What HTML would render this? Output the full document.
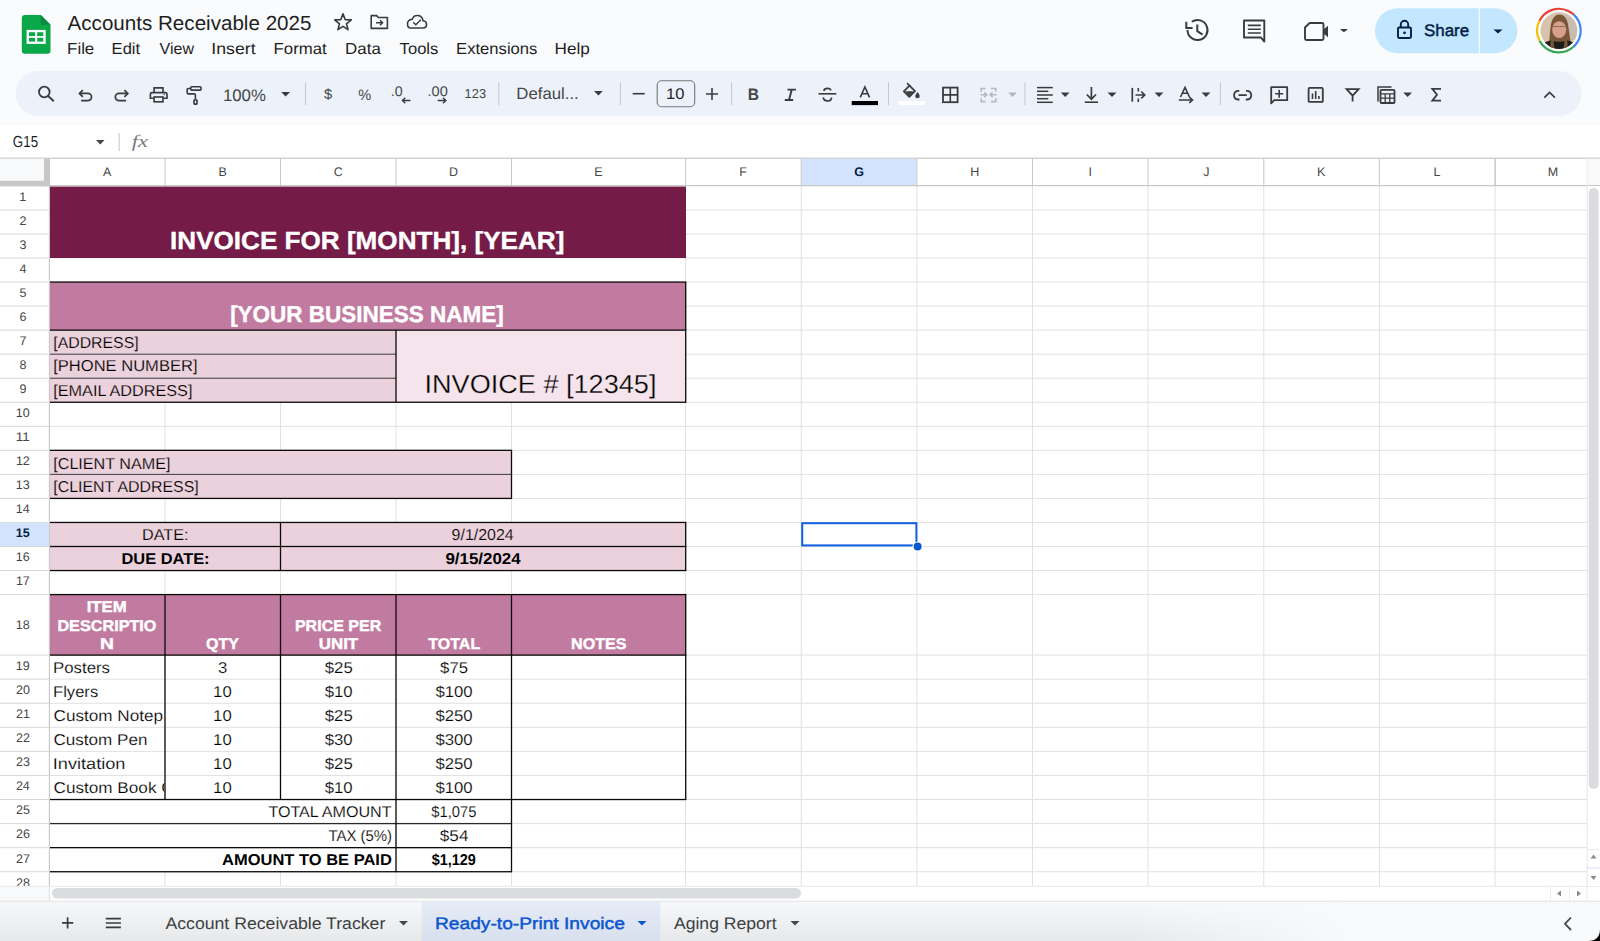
<!DOCTYPE html>
<html><head><meta charset="utf-8"><title>Accounts Receivable 2025 - Google Sheets</title>
<style>
html,body{margin:0;padding:0;width:1600px;height:941px;overflow:hidden;background:#fff;font-family:"Liberation Sans",sans-serif;}
text{font-family:"Liberation Sans",sans-serif;text-rendering:geometricPrecision;}
</style></head><body>
<div style="position:relative;width:1600px;height:941px;overflow:hidden">
<svg width="1600" height="941" viewBox="0 0 1600 941" style="position:absolute;left:0;top:0;font-family:'Liberation Sans',sans-serif">
<rect x="0.00" y="0.00" width="1600.00" height="126.00" fill="#f9fbfd" />
<rect x="0.00" y="126.00" width="1600.00" height="760.00" fill="#ffffff" />
<rect x="15.5" y="71" width="1566" height="45" rx="22.5" fill="#edf2fa"/>
<rect x="164.50" y="185.90" width="1.00" height="700.10" fill="#e1e1e1" />
<rect x="280.00" y="185.90" width="1.00" height="700.10" fill="#e1e1e1" />
<rect x="395.50" y="185.90" width="1.00" height="700.10" fill="#e1e1e1" />
<rect x="511.00" y="185.90" width="1.00" height="700.10" fill="#e1e1e1" />
<rect x="685.10" y="185.90" width="1.00" height="700.10" fill="#e1e1e1" />
<rect x="800.70" y="185.90" width="1.00" height="700.10" fill="#e1e1e1" />
<rect x="916.40" y="185.90" width="1.00" height="700.10" fill="#e1e1e1" />
<rect x="1032.00" y="185.90" width="1.00" height="700.10" fill="#e1e1e1" />
<rect x="1147.60" y="185.90" width="1.00" height="700.10" fill="#e1e1e1" />
<rect x="1263.30" y="185.90" width="1.00" height="700.10" fill="#e1e1e1" />
<rect x="1378.90" y="185.90" width="1.00" height="700.10" fill="#e1e1e1" />
<rect x="1494.60" y="185.90" width="1.00" height="700.10" fill="#e1e1e1" />
<rect x="49.50" y="209.44" width="1537.50" height="1.00" fill="#e1e1e1" />
<rect x="49.50" y="233.48" width="1537.50" height="1.00" fill="#e1e1e1" />
<rect x="49.50" y="257.52" width="1537.50" height="1.00" fill="#e1e1e1" />
<rect x="49.50" y="281.56" width="1537.50" height="1.00" fill="#e1e1e1" />
<rect x="49.50" y="305.60" width="1537.50" height="1.00" fill="#e1e1e1" />
<rect x="49.50" y="329.64" width="1537.50" height="1.00" fill="#e1e1e1" />
<rect x="49.50" y="353.68" width="1537.50" height="1.00" fill="#e1e1e1" />
<rect x="49.50" y="377.72" width="1537.50" height="1.00" fill="#e1e1e1" />
<rect x="49.50" y="401.76" width="1537.50" height="1.00" fill="#e1e1e1" />
<rect x="49.50" y="425.80" width="1537.50" height="1.00" fill="#e1e1e1" />
<rect x="49.50" y="449.84" width="1537.50" height="1.00" fill="#e1e1e1" />
<rect x="49.50" y="473.88" width="1537.50" height="1.00" fill="#e1e1e1" />
<rect x="49.50" y="497.92" width="1537.50" height="1.00" fill="#e1e1e1" />
<rect x="49.50" y="521.96" width="1537.50" height="1.00" fill="#e1e1e1" />
<rect x="49.50" y="546.00" width="1537.50" height="1.00" fill="#e1e1e1" />
<rect x="49.50" y="570.04" width="1537.50" height="1.00" fill="#e1e1e1" />
<rect x="49.50" y="594.08" width="1537.50" height="1.00" fill="#e1e1e1" />
<rect x="49.50" y="654.60" width="1537.50" height="1.00" fill="#e1e1e1" />
<rect x="49.50" y="678.67" width="1537.50" height="1.00" fill="#e1e1e1" />
<rect x="49.50" y="702.74" width="1537.50" height="1.00" fill="#e1e1e1" />
<rect x="49.50" y="726.81" width="1537.50" height="1.00" fill="#e1e1e1" />
<rect x="49.50" y="750.88" width="1537.50" height="1.00" fill="#e1e1e1" />
<rect x="49.50" y="774.95" width="1537.50" height="1.00" fill="#e1e1e1" />
<rect x="49.50" y="799.02" width="1537.50" height="1.00" fill="#e1e1e1" />
<rect x="49.50" y="823.09" width="1537.50" height="1.00" fill="#e1e1e1" />
<rect x="49.50" y="847.16" width="1537.50" height="1.00" fill="#e1e1e1" />
<rect x="49.50" y="871.23" width="1537.50" height="1.00" fill="#e1e1e1" />
<rect x="50.00" y="186.50" width="636.00" height="71.52" fill="#741b47" />
<rect x="50.00" y="258.52" width="635.00" height="23.04" fill="#ffffff" />
<rect x="50.00" y="282.06" width="636.00" height="48.08" fill="#c27ba0" />
<rect x="50.00" y="330.14" width="346.00" height="72.12" fill="#ead1dc" />
<rect x="396.00" y="330.14" width="290.00" height="72.12" fill="#f5e4eb" />
<rect x="50.00" y="450.34" width="461.50" height="48.08" fill="#ead1dc" />
<rect x="50.00" y="522.46" width="636.00" height="48.08" fill="#ead1dc" />
<rect x="50.00" y="594.58" width="636.00" height="60.52" fill="#c27ba0" />
<rect x="50.50" y="655.60" width="0.00" height="0.00" fill="#fff" />
<rect x="50.20" y="655.10" width="345.50" height="0.00" fill="#fff" />
<rect x="50.30" y="800.12" width="345.20" height="22.87" fill="#ffffff" />
<rect x="50.30" y="824.19" width="345.20" height="22.87" fill="#ffffff" />
<rect x="50.30" y="848.26" width="345.20" height="22.87" fill="#ffffff" />
<rect x="49.50" y="281.41" width="636.80" height="1.30" fill="#0a0a0a" />
<rect x="49.50" y="329.49" width="636.80" height="1.30" fill="#0a0a0a" />
<rect x="49.50" y="353.68" width="346.50" height="1.00" fill="#3c3c3c" />
<rect x="49.50" y="377.72" width="346.50" height="1.00" fill="#3c3c3c" />
<rect x="49.50" y="401.61" width="636.80" height="1.30" fill="#0a0a0a" />
<rect x="685.05" y="282.06" width="1.30" height="120.20" fill="#0a0a0a" />
<rect x="395.35" y="330.14" width="1.30" height="72.12" fill="#0a0a0a" />
<rect x="49.50" y="449.69" width="462.60" height="1.30" fill="#0a0a0a" />
<rect x="49.50" y="473.88" width="462.60" height="1.00" fill="#3c3c3c" />
<rect x="49.50" y="497.77" width="462.60" height="1.30" fill="#0a0a0a" />
<rect x="510.85" y="450.34" width="1.30" height="48.08" fill="#0a0a0a" />
<rect x="49.50" y="521.81" width="636.80" height="1.30" fill="#0a0a0a" />
<rect x="49.50" y="545.85" width="636.80" height="1.30" fill="#0a0a0a" />
<rect x="49.50" y="569.89" width="636.80" height="1.30" fill="#0a0a0a" />
<rect x="279.85" y="522.46" width="1.30" height="48.08" fill="#0a0a0a" />
<rect x="685.05" y="522.46" width="1.30" height="48.08" fill="#0a0a0a" />
<rect x="49.50" y="593.93" width="636.80" height="1.30" fill="#0a0a0a" />
<rect x="49.50" y="654.45" width="636.80" height="1.30" fill="#0a0a0a" />
<rect x="49.50" y="798.87" width="636.80" height="1.30" fill="#0a0a0a" />
<rect x="164.35" y="594.58" width="1.30" height="204.94" fill="#0a0a0a" />
<rect x="279.85" y="594.58" width="1.30" height="204.94" fill="#0a0a0a" />
<rect x="395.35" y="594.58" width="1.30" height="204.94" fill="#0a0a0a" />
<rect x="510.85" y="594.58" width="1.30" height="204.94" fill="#0a0a0a" />
<rect x="685.05" y="594.58" width="1.30" height="204.94" fill="#0a0a0a" />
<rect x="49.50" y="822.94" width="462.60" height="1.30" fill="#2a2a2a" />
<rect x="49.50" y="847.01" width="462.60" height="1.30" fill="#0a0a0a" />
<rect x="49.50" y="871.08" width="462.60" height="1.30" fill="#0a0a0a" />
<rect x="395.35" y="799.52" width="1.30" height="72.21" fill="#0a0a0a" />
<rect x="510.85" y="799.52" width="1.30" height="72.21" fill="#0a0a0a" />
<text x="170.05" y="248.90" font-size="24.71" font-weight="bold" stroke="#ffffff" stroke-width="0.40" fill="#ffffff" textLength="394.31" lengthAdjust="spacingAndGlyphs">INVOICE FOR [MONTH], [YEAR]</text>
<text x="230.14" y="322.40" font-size="22.97" font-weight="bold" stroke="#ffffff" stroke-width="0.40" fill="#ffffff" textLength="273.63" lengthAdjust="spacingAndGlyphs">[YOUR BUSINESS NAME]</text>
<text x="53.27" y="348.10" font-size="15.77" stroke="#ead1dc" stroke-width="0.18" fill="#000" textLength="85.36" lengthAdjust="spacingAndGlyphs">[ADDRESS]</text>
<text x="53.22" y="371.30" font-size="15.77" stroke="#ead1dc" stroke-width="0.18" fill="#000" textLength="144.26" lengthAdjust="spacingAndGlyphs">[PHONE NUMBER]</text>
<text x="53.26" y="395.60" font-size="15.77" stroke="#ead1dc" stroke-width="0.18" fill="#000" textLength="139.19" lengthAdjust="spacingAndGlyphs">[EMAIL ADDRESS]</text>
<text x="424.50" y="393.00" font-size="26.16" stroke="#f5e4eb" stroke-width="0.30" fill="#000" textLength="231.93" lengthAdjust="spacingAndGlyphs">INVOICE # [12345]</text>
<text x="53.25" y="468.50" font-size="15.77" stroke="#ead1dc" stroke-width="0.18" fill="#000" textLength="117.20" lengthAdjust="spacingAndGlyphs">[CLIENT NAME]</text>
<text x="53.28" y="492.00" font-size="15.77" stroke="#ead1dc" stroke-width="0.18" fill="#000" textLength="145.45" lengthAdjust="spacingAndGlyphs">[CLIENT ADDRESS]</text>
<text x="142.01" y="540.00" font-size="15.77" stroke="#ead1dc" stroke-width="0.18" fill="#000" textLength="46.43" lengthAdjust="spacingAndGlyphs">DATE:</text>
<text x="121.52" y="563.80" font-size="15.77" font-weight="bold" fill="#000" textLength="88.04" lengthAdjust="spacingAndGlyphs">DUE DATE:</text>
<text x="451.55" y="540.00" font-size="15.77" stroke="#ead1dc" stroke-width="0.18" fill="#000" textLength="62.22" lengthAdjust="spacingAndGlyphs">9/1/2024</text>
<text x="445.41" y="563.80" font-size="15.77" font-weight="bold" fill="#000" textLength="75.18" lengthAdjust="spacingAndGlyphs">9/15/2024</text>
<text x="86.68" y="612.00" font-size="15.55" font-weight="bold" stroke="#ffffff" stroke-width="0.40" fill="#ffffff" textLength="40.04" lengthAdjust="spacingAndGlyphs">ITEM</text>
<text x="57.42" y="630.50" font-size="15.55" font-weight="bold" stroke="#ffffff" stroke-width="0.40" fill="#ffffff" textLength="99.06" lengthAdjust="spacingAndGlyphs">DESCRIPTIO</text>
<text x="100.01" y="649.00" font-size="15.55" font-weight="bold" stroke="#ffffff" stroke-width="0.40" fill="#ffffff" textLength="13.88" lengthAdjust="spacingAndGlyphs">N</text>
<text x="206.04" y="649.00" font-size="15.55" font-weight="bold" stroke="#ffffff" stroke-width="0.40" fill="#ffffff" textLength="32.91" lengthAdjust="spacingAndGlyphs">QTY</text>
<text x="294.93" y="630.50" font-size="15.55" font-weight="bold" stroke="#ffffff" stroke-width="0.40" fill="#ffffff" textLength="86.40" lengthAdjust="spacingAndGlyphs">PRICE PER</text>
<text x="318.79" y="649.00" font-size="15.55" font-weight="bold" stroke="#ffffff" stroke-width="0.40" fill="#ffffff" textLength="39.40" lengthAdjust="spacingAndGlyphs">UNIT</text>
<text x="428.33" y="648.50" font-size="15.55" font-weight="bold" stroke="#ffffff" stroke-width="0.40" fill="#ffffff" textLength="51.85" lengthAdjust="spacingAndGlyphs">TOTAL</text>
<text x="571.12" y="648.50" font-size="15.55" font-weight="bold" stroke="#ffffff" stroke-width="0.40" fill="#ffffff" textLength="55.51" lengthAdjust="spacingAndGlyphs">NOTES</text>
<text x="53.02" y="672.57" font-size="15.70" stroke="#ffffff" stroke-width="0.18" fill="#000" textLength="56.99" lengthAdjust="spacingAndGlyphs">Posters</text>
<text x="218.10" y="672.57" font-size="15.70" stroke="#ffffff" stroke-width="0.18" fill="#000" textLength="9.31" lengthAdjust="spacingAndGlyphs">3</text>
<text x="324.80" y="672.57" font-size="15.70" stroke="#ffffff" stroke-width="0.18" fill="#000" textLength="27.92" lengthAdjust="spacingAndGlyphs">$25</text>
<text x="440.10" y="672.57" font-size="15.70" stroke="#ffffff" stroke-width="0.18" fill="#000" textLength="27.92" lengthAdjust="spacingAndGlyphs">$75</text>
<text x="53.04" y="696.64" font-size="15.70" stroke="#ffffff" stroke-width="0.18" fill="#000" textLength="45.16" lengthAdjust="spacingAndGlyphs">Flyers</text>
<text x="213.08" y="696.64" font-size="15.70" stroke="#ffffff" stroke-width="0.18" fill="#000" textLength="18.61" lengthAdjust="spacingAndGlyphs">10</text>
<text x="324.78" y="696.64" font-size="15.70" stroke="#ffffff" stroke-width="0.18" fill="#000" textLength="27.92" lengthAdjust="spacingAndGlyphs">$10</text>
<text x="435.42" y="696.64" font-size="15.70" stroke="#ffffff" stroke-width="0.18" fill="#000" textLength="37.22" lengthAdjust="spacingAndGlyphs">$100</text>
<svg x="50" y="703.24" width="114.3" height="24" overflow="hidden">
<text x="3.53" y="17.47" font-size="15.70" fill="#000" stroke="#fff" stroke-width="0.18" textLength="137.28" lengthAdjust="spacingAndGlyphs">Custom Notepads</text>
</svg>
<text x="213.08" y="720.71" font-size="15.70" stroke="#ffffff" stroke-width="0.18" fill="#000" textLength="18.61" lengthAdjust="spacingAndGlyphs">10</text>
<text x="324.80" y="720.71" font-size="15.70" stroke="#ffffff" stroke-width="0.18" fill="#000" textLength="27.92" lengthAdjust="spacingAndGlyphs">$25</text>
<text x="435.42" y="720.71" font-size="15.70" stroke="#ffffff" stroke-width="0.18" fill="#000" textLength="37.22" lengthAdjust="spacingAndGlyphs">$250</text>
<text x="53.53" y="744.78" font-size="15.70" stroke="#ffffff" stroke-width="0.18" fill="#000" textLength="93.87" lengthAdjust="spacingAndGlyphs">Custom Pen</text>
<text x="213.08" y="744.78" font-size="15.70" stroke="#ffffff" stroke-width="0.18" fill="#000" textLength="18.61" lengthAdjust="spacingAndGlyphs">10</text>
<text x="324.78" y="744.78" font-size="15.70" stroke="#ffffff" stroke-width="0.18" fill="#000" textLength="27.92" lengthAdjust="spacingAndGlyphs">$30</text>
<text x="435.42" y="744.78" font-size="15.70" stroke="#ffffff" stroke-width="0.18" fill="#000" textLength="37.22" lengthAdjust="spacingAndGlyphs">$300</text>
<text x="52.72" y="768.85" font-size="15.70" stroke="#ffffff" stroke-width="0.18" fill="#000" textLength="72.76" lengthAdjust="spacingAndGlyphs">Invitation</text>
<text x="213.08" y="768.85" font-size="15.70" stroke="#ffffff" stroke-width="0.18" fill="#000" textLength="18.61" lengthAdjust="spacingAndGlyphs">10</text>
<text x="324.80" y="768.85" font-size="15.70" stroke="#ffffff" stroke-width="0.18" fill="#000" textLength="27.92" lengthAdjust="spacingAndGlyphs">$25</text>
<text x="435.42" y="768.85" font-size="15.70" stroke="#ffffff" stroke-width="0.18" fill="#000" textLength="37.22" lengthAdjust="spacingAndGlyphs">$250</text>
<svg x="50" y="775.45" width="114.3" height="24" overflow="hidden">
<text x="3.53" y="17.47" font-size="15.70" fill="#000" stroke="#fff" stroke-width="0.18" textLength="162.04" lengthAdjust="spacingAndGlyphs">Custom Book Covers</text>
</svg>
<text x="213.08" y="792.92" font-size="15.70" stroke="#ffffff" stroke-width="0.18" fill="#000" textLength="18.61" lengthAdjust="spacingAndGlyphs">10</text>
<text x="324.78" y="792.92" font-size="15.70" stroke="#ffffff" stroke-width="0.18" fill="#000" textLength="27.92" lengthAdjust="spacingAndGlyphs">$10</text>
<text x="435.42" y="792.92" font-size="15.70" stroke="#ffffff" stroke-width="0.18" fill="#000" textLength="37.22" lengthAdjust="spacingAndGlyphs">$100</text>
<text x="268.40" y="817.00" font-size="15.70" stroke="#ffffff" stroke-width="0.18" fill="#000" textLength="123.16" lengthAdjust="spacingAndGlyphs">TOTAL AMOUNT</text>
<text x="328.42" y="841.00" font-size="15.70" stroke="#ffffff" stroke-width="0.18" fill="#000" textLength="63.69" lengthAdjust="spacingAndGlyphs">TAX (5%)</text>
<text x="222.09" y="865.00" font-size="15.70" font-weight="bold" fill="#000" textLength="169.79" lengthAdjust="spacingAndGlyphs">AMOUNT TO BE PAID</text>
<text x="431.24" y="817.00" font-size="15.70" stroke="#ffffff" stroke-width="0.18" fill="#000" textLength="45.18" lengthAdjust="spacingAndGlyphs">$1,075</text>
<text x="439.82" y="841.00" font-size="15.70" stroke="#ffffff" stroke-width="0.18" fill="#000" textLength="28.69" lengthAdjust="spacingAndGlyphs">$54</text>
<text x="431.71" y="865.00" font-size="15.70" font-weight="bold" fill="#000" textLength="44.13" lengthAdjust="spacingAndGlyphs">$1,129</text>
<rect x="802.2" y="523.2" width="114.2" height="22.2" fill="none" stroke="#0f5fe0" stroke-width="2"/>
<circle cx="917.6" cy="546.6" r="5.2" fill="#ffffff"/>
<circle cx="917.6" cy="546.6" r="4.0" fill="#0b57d0"/>
<rect x="0.00" y="158.00" width="1587.00" height="27.90" fill="#ffffff" />
<rect x="0.00" y="157.60" width="1600.00" height="1.20" fill="#c7c7c7" />
<rect x="49.50" y="185.00" width="1550.50" height="1.20" fill="#c7c7c7" />
<rect x="0.00" y="158.80" width="44.00" height="22.00" fill="#f8f9fa" />
<rect x="44.00" y="158.80" width="5.50" height="27.80" fill="#c7c7c7" />
<rect x="0.00" y="180.80" width="49.50" height="5.80" fill="#c7c7c7" />
<rect x="801.70" y="158.80" width="114.70" height="26.20" fill="#d3e3fd" />
<text x="103.08" y="176.20" font-size="12.50" fill="#444746" textLength="8.34" lengthAdjust="spacingAndGlyphs">A</text>
<rect x="164.50" y="158.20" width="1.00" height="27.40" fill="#c7c7c7" />
<text x="218.40" y="176.20" font-size="12.50" fill="#444746" textLength="8.34" lengthAdjust="spacingAndGlyphs">B</text>
<rect x="280.00" y="158.20" width="1.00" height="27.40" fill="#c7c7c7" />
<text x="333.66" y="176.20" font-size="12.50" fill="#444746" textLength="9.03" lengthAdjust="spacingAndGlyphs">C</text>
<rect x="395.50" y="158.20" width="1.00" height="27.40" fill="#c7c7c7" />
<text x="449.02" y="176.20" font-size="12.50" fill="#444746" textLength="9.03" lengthAdjust="spacingAndGlyphs">D</text>
<rect x="511.00" y="158.20" width="1.00" height="27.40" fill="#c7c7c7" />
<text x="594.14" y="176.20" font-size="12.50" fill="#444746" textLength="8.34" lengthAdjust="spacingAndGlyphs">E</text>
<rect x="685.10" y="158.20" width="1.00" height="27.40" fill="#c7c7c7" />
<text x="739.32" y="176.20" font-size="12.50" fill="#444746" textLength="7.64" lengthAdjust="spacingAndGlyphs">F</text>
<rect x="800.70" y="158.20" width="1.00" height="27.40" fill="#c7c7c7" />
<text x="854.32" y="176.20" font-size="12.50" font-weight="bold" fill="#041e49" textLength="9.72" lengthAdjust="spacingAndGlyphs">G</text>
<rect x="916.40" y="158.20" width="1.00" height="27.40" fill="#c7c7c7" />
<text x="970.18" y="176.20" font-size="12.50" fill="#444746" textLength="9.03" lengthAdjust="spacingAndGlyphs">H</text>
<rect x="1032.00" y="158.20" width="1.00" height="27.40" fill="#c7c7c7" />
<text x="1088.56" y="176.20" font-size="12.50" fill="#444746" textLength="3.47" lengthAdjust="spacingAndGlyphs">I</text>
<rect x="1147.60" y="158.20" width="1.00" height="27.40" fill="#c7c7c7" />
<text x="1203.19" y="176.20" font-size="12.50" fill="#444746" textLength="6.25" lengthAdjust="spacingAndGlyphs">J</text>
<rect x="1263.30" y="158.20" width="1.00" height="27.40" fill="#c7c7c7" />
<text x="1316.99" y="176.20" font-size="12.50" fill="#444746" textLength="8.34" lengthAdjust="spacingAndGlyphs">K</text>
<rect x="1378.90" y="158.20" width="1.00" height="27.40" fill="#c7c7c7" />
<text x="1433.47" y="176.20" font-size="12.50" fill="#444746" textLength="6.95" lengthAdjust="spacingAndGlyphs">L</text>
<rect x="1494.60" y="158.20" width="1.00" height="27.40" fill="#c7c7c7" />
<text x="1547.69" y="176.20" font-size="12.50" fill="#444746" textLength="10.41" lengthAdjust="spacingAndGlyphs">M</text>
<rect x="1494.60" y="158.20" width="1.00" height="27.40" fill="#c7c7c7" />
<rect x="0.00" y="186.60" width="49.00" height="700.00" fill="#ffffff" />
<rect x="48.85" y="158.20" width="1.10" height="727.80" fill="#c7c7c7" />
<rect x="0.00" y="209.44" width="49.40" height="1.00" fill="#d9d9d9" />
<text x="19.35" y="200.80" font-size="12.50" fill="#444746" textLength="6.95" lengthAdjust="spacingAndGlyphs">1</text>
<rect x="0.00" y="233.48" width="49.40" height="1.00" fill="#d9d9d9" />
<text x="19.52" y="224.84" font-size="12.50" fill="#444746" textLength="6.95" lengthAdjust="spacingAndGlyphs">2</text>
<rect x="0.00" y="257.52" width="49.40" height="1.00" fill="#d9d9d9" />
<text x="19.56" y="248.88" font-size="12.50" fill="#444746" textLength="6.95" lengthAdjust="spacingAndGlyphs">3</text>
<rect x="0.00" y="281.56" width="49.40" height="1.00" fill="#d9d9d9" />
<text x="19.56" y="272.92" font-size="12.50" fill="#444746" textLength="6.95" lengthAdjust="spacingAndGlyphs">4</text>
<rect x="0.00" y="305.60" width="49.40" height="1.00" fill="#d9d9d9" />
<text x="19.54" y="296.96" font-size="12.50" fill="#444746" textLength="6.95" lengthAdjust="spacingAndGlyphs">5</text>
<rect x="0.00" y="329.64" width="49.40" height="1.00" fill="#d9d9d9" />
<text x="19.48" y="321.00" font-size="12.50" fill="#444746" textLength="6.95" lengthAdjust="spacingAndGlyphs">6</text>
<rect x="0.00" y="353.68" width="49.40" height="1.00" fill="#d9d9d9" />
<text x="19.52" y="345.04" font-size="12.50" fill="#444746" textLength="6.95" lengthAdjust="spacingAndGlyphs">7</text>
<rect x="0.00" y="377.72" width="49.40" height="1.00" fill="#d9d9d9" />
<text x="19.52" y="369.08" font-size="12.50" fill="#444746" textLength="6.95" lengthAdjust="spacingAndGlyphs">8</text>
<rect x="0.00" y="401.76" width="49.40" height="1.00" fill="#d9d9d9" />
<text x="19.53" y="393.12" font-size="12.50" fill="#444746" textLength="6.95" lengthAdjust="spacingAndGlyphs">9</text>
<rect x="0.00" y="425.80" width="49.40" height="1.00" fill="#d9d9d9" />
<text x="15.82" y="417.16" font-size="12.50" fill="#444746" textLength="13.90" lengthAdjust="spacingAndGlyphs">10</text>
<rect x="0.00" y="449.84" width="49.40" height="1.00" fill="#d9d9d9" />
<text x="15.88" y="441.20" font-size="12.50" fill="#444746" textLength="13.90" lengthAdjust="spacingAndGlyphs">11</text>
<rect x="0.00" y="473.88" width="49.40" height="1.00" fill="#d9d9d9" />
<text x="15.89" y="465.24" font-size="12.50" fill="#444746" textLength="13.90" lengthAdjust="spacingAndGlyphs">12</text>
<rect x="0.00" y="497.92" width="49.40" height="1.00" fill="#d9d9d9" />
<text x="15.85" y="489.28" font-size="12.50" fill="#444746" textLength="13.90" lengthAdjust="spacingAndGlyphs">13</text>
<rect x="0.00" y="521.96" width="49.40" height="1.00" fill="#d9d9d9" />
<text x="15.76" y="513.32" font-size="12.50" fill="#444746" textLength="13.90" lengthAdjust="spacingAndGlyphs">14</text>
<rect x="0.00" y="522.96" width="49.00" height="23.04" fill="#d3e3fd" />
<rect x="0.00" y="546.00" width="49.40" height="1.00" fill="#d9d9d9" />
<text x="15.83" y="537.36" font-size="12.50" font-weight="bold" fill="#041e49" textLength="13.90" lengthAdjust="spacingAndGlyphs">15</text>
<rect x="0.00" y="570.04" width="49.40" height="1.00" fill="#d9d9d9" />
<text x="15.85" y="561.40" font-size="12.50" fill="#444746" textLength="13.90" lengthAdjust="spacingAndGlyphs">16</text>
<rect x="0.00" y="594.08" width="49.40" height="1.00" fill="#d9d9d9" />
<text x="15.89" y="585.44" font-size="12.50" fill="#444746" textLength="13.90" lengthAdjust="spacingAndGlyphs">17</text>
<rect x="0.00" y="654.60" width="49.40" height="1.00" fill="#d9d9d9" />
<text x="15.84" y="629.00" font-size="12.50" fill="#444746" textLength="13.90" lengthAdjust="spacingAndGlyphs">18</text>
<rect x="0.00" y="678.67" width="49.40" height="1.00" fill="#d9d9d9" />
<text x="15.87" y="670.00" font-size="12.50" fill="#444746" textLength="13.90" lengthAdjust="spacingAndGlyphs">19</text>
<rect x="0.00" y="702.74" width="49.40" height="1.00" fill="#d9d9d9" />
<text x="15.98" y="694.07" font-size="12.50" fill="#444746" textLength="13.90" lengthAdjust="spacingAndGlyphs">20</text>
<rect x="0.00" y="726.81" width="49.40" height="1.00" fill="#d9d9d9" />
<text x="16.04" y="718.14" font-size="12.50" fill="#444746" textLength="13.90" lengthAdjust="spacingAndGlyphs">21</text>
<rect x="0.00" y="750.88" width="49.40" height="1.00" fill="#d9d9d9" />
<text x="16.05" y="742.21" font-size="12.50" fill="#444746" textLength="13.90" lengthAdjust="spacingAndGlyphs">22</text>
<rect x="0.00" y="774.95" width="49.40" height="1.00" fill="#d9d9d9" />
<text x="16.01" y="766.28" font-size="12.50" fill="#444746" textLength="13.90" lengthAdjust="spacingAndGlyphs">23</text>
<rect x="0.00" y="799.02" width="49.40" height="1.00" fill="#d9d9d9" />
<text x="15.92" y="790.35" font-size="12.50" fill="#444746" textLength="13.90" lengthAdjust="spacingAndGlyphs">24</text>
<rect x="0.00" y="823.09" width="49.40" height="1.00" fill="#d9d9d9" />
<text x="16.00" y="814.42" font-size="12.50" fill="#444746" textLength="13.90" lengthAdjust="spacingAndGlyphs">25</text>
<rect x="0.00" y="847.16" width="49.40" height="1.00" fill="#d9d9d9" />
<text x="16.01" y="838.49" font-size="12.50" fill="#444746" textLength="13.90" lengthAdjust="spacingAndGlyphs">26</text>
<rect x="0.00" y="871.23" width="49.40" height="1.00" fill="#d9d9d9" />
<text x="16.05" y="862.56" font-size="12.50" fill="#444746" textLength="13.90" lengthAdjust="spacingAndGlyphs">27</text>
<text x="16.01" y="886.93" font-size="12.50" fill="#444746" textLength="13.90" lengthAdjust="spacingAndGlyphs">28</text>
<rect x="0.00" y="886.00" width="1600.00" height="15.00" fill="#ffffff" />
<rect x="0.00" y="885.80" width="1600.00" height="1.00" fill="#e8e8e8" />
<rect x="0.00" y="886.80" width="49.00" height="14.00" fill="#f8f9fa" />
<rect x="48.90" y="886.00" width="1.00" height="15.00" fill="#e0e0e0" />
<rect x="52" y="888" width="749" height="10.5" rx="5.25" fill="#dadce0"/>
<rect x="1550.00" y="886.00" width="1.00" height="15.00" fill="#ececec" />
<rect x="1569.00" y="886.00" width="1.00" height="15.00" fill="#ececec" />
<rect x="1586.50" y="886.00" width="1.00" height="15.00" fill="#ececec" />
<path d="M1561 890.5 L1557 893.5 L1561 896.5Z" fill="#8a8a8a"/>
<path d="M1577 890.5 L1581 893.5 L1577 896.5Z" fill="#8a8a8a"/>
<rect x="1587.00" y="186.00" width="13.00" height="700.00" fill="#ffffff" />
<rect x="1586.70" y="158.00" width="1.00" height="728.00" fill="#e6e6e6" />
<rect x="1587.70" y="158.80" width="12.30" height="26.20" fill="#f8f9fa" />
<rect x="1588.7" y="188" width="10" height="601" rx="5" fill="#dadce0"/>
<rect x="1587.00" y="849.00" width="13.00" height="1.00" fill="#ececec" />
<rect x="1587.00" y="867.50" width="13.00" height="1.00" fill="#d8e2f5" />
<path d="M1593.5 854.5 L1590.5 858.5 L1596.5 858.5Z" fill="#8a8a8a"/>
<path d="M1593.5 880 L1590.5 876 L1596.5 876Z" fill="#8a8a8a"/>
<text x="12.83" y="146.50" font-size="15.99" fill="#1f1f1f" textLength="25.23" lengthAdjust="spacingAndGlyphs">G15</text>
<path d="M96 140 L104.5 140 L100.25 144.5Z" fill="#444746"/>
<rect x="118.70" y="133.00" width="1.00" height="18.00" fill="#c7c7c7" />
<text x="131.8" y="147.3" style="font-family:'Liberation Serif',serif;font-style:italic" font-size="17.5" fill="#7a7a7a" textLength="16.2" lengthAdjust="spacingAndGlyphs">fx</text>
<defs><linearGradient id="tabv" x1="0" y1="0" x2="0" y2="1"><stop offset="0" stop-color="#f7f8fa"/><stop offset="1" stop-color="#e7e8ea"/></linearGradient><linearGradient id="tabh" x1="0" y1="0" x2="1" y2="0"><stop offset="0" stop-color="#f9fafc" stop-opacity="0"/><stop offset="1" stop-color="#f9fafc" stop-opacity="1"/></linearGradient></defs>
<rect x="0.00" y="901.00" width="1600.00" height="40.00" fill="url(#tabv)" />
<rect x="1120.00" y="901.00" width="240.00" height="40.00" fill="url(#tabh)" />
<rect x="1360.00" y="901.00" width="240.00" height="40.00" fill="#f9fafc" />
<rect x="0.00" y="900.70" width="1600.00" height="1.00" fill="#e3e3e3" />
<defs><linearGradient id="acttab" x1="0" y1="0" x2="0" y2="1"><stop offset="0" stop-color="#e5ebf7"/><stop offset="1" stop-color="#d9e0ed"/></linearGradient></defs>
<rect x="421.70" y="901.50" width="238.60" height="39.50" fill="url(#acttab)" />
<path d="M62 922.8 H73.2 M67.6 917.2 V928.4" stroke="#3a3b3d" stroke-width="1.7" fill="none"/>
<path d="M105.8 918.6 H120.9 M105.8 923 H120.9 M105.8 927.4 H120.9" stroke="#3a3b3d" stroke-width="1.6" fill="none"/>
<text x="165.47" y="929.00" font-size="16.57" fill="#3c4043" textLength="219.83" lengthAdjust="spacingAndGlyphs">Account Receivable Tracker</text>
<path d="M399 921 L408 921 L403.5 925.5Z" fill="#444746"/>
<text x="434.93" y="929.00" font-size="16.57" stroke="#0b57d0" stroke-width="0.45" fill="#0b57d0" textLength="189.93" lengthAdjust="spacingAndGlyphs">Ready-to-Print Invoice</text>
<path d="M637.5 921 L646.5 921 L642 925.5Z" fill="#0b57d0"/>
<text x="673.97" y="929.00" font-size="16.57" fill="#3c4043" textLength="102.56" lengthAdjust="spacingAndGlyphs">Aging Report</text>
<path d="M790.5 921 L799.5 921 L795 925.5Z" fill="#444746"/>
<path d="M1571 917.5 L1565 923.8 L1571 930" stroke="#444746" stroke-width="1.8" fill="none"/>
<path d="M1600 929 L1600 941 L1588 941 Q1600 941 1600 929Z" fill="#000"/>
<path d="M24.8 15 H40.8 L50.5 24.7 V50.8 Q50.5 53.8 47.5 53.8 H24.8 Q21.8 53.8 21.8 50.8 V18 Q21.8 15 24.8 15Z" fill="#0ba84a"/>
<path d="M40.8 15 L50.5 24.7 H40.8Z" fill="#0a8a3c"/>
<rect x="26.60" y="29.90" width="19.10" height="14.00" fill="#ffffff" />
<rect x="29.00" y="32.20" width="6.10" height="3.80" fill="#0ba84a" />
<rect x="37.20" y="32.20" width="6.10" height="3.80" fill="#0ba84a" />
<rect x="29.00" y="37.80" width="6.10" height="3.80" fill="#0ba84a" />
<rect x="37.20" y="37.80" width="6.10" height="3.80" fill="#0ba84a" />
<text x="67.56" y="29.50" font-size="20.35" fill="#1f1f1f" textLength="243.91" lengthAdjust="spacingAndGlyphs">Accounts Receivable 2025</text>
<path d="M343 13.8 L345.2 19.6 L351.3 19.9 L346.5 23.8 L348.1 29.7 L343 26.3 L337.9 29.7 L339.5 23.8 L334.7 19.9 L340.8 19.6Z" stroke="#3a3b3d" stroke-width="1.6" fill="none" stroke-linejoin="round"/>
<path d="M371.2 15.6 H376.6 L378.4 17.5 H387.4 V28.4 H371.2Z" stroke="#3a3b3d" stroke-width="1.6" fill="none" stroke-linejoin="round"/>
<path d="M376 22.8 H382.4 M380 20.3 L382.6 22.8 L380 25.3" stroke="#3a3b3d" stroke-width="1.5" fill="none"/>
<path d="M410.5 28 H423 Q426.5 28 426.5 24.5 Q426.5 21 423 20.7 Q422.3 15.5 417.3 15.5 Q413.5 15.5 412.2 19.2 Q407.5 19.7 407.5 23.8 Q407.5 28 410.5 28Z" stroke="#3a3b3d" stroke-width="1.6" fill="none"/>
<path d="M413.2 22.3 L415.8 24.8 L420.8 19.8" stroke="#3a3b3d" stroke-width="1.5" fill="none"/>
<text x="67.12" y="54.00" font-size="15.99" fill="#1f1f1f" textLength="27.13" lengthAdjust="spacingAndGlyphs">File</text>
<text x="111.64" y="54.00" font-size="15.99" fill="#1f1f1f" textLength="28.48" lengthAdjust="spacingAndGlyphs">Edit</text>
<text x="159.53" y="54.00" font-size="15.99" fill="#1f1f1f" textLength="34.43" lengthAdjust="spacingAndGlyphs">View</text>
<text x="211.37" y="54.00" font-size="15.99" fill="#1f1f1f" textLength="44.26" lengthAdjust="spacingAndGlyphs">Insert</text>
<text x="273.62" y="54.00" font-size="15.99" fill="#1f1f1f" textLength="53.10" lengthAdjust="spacingAndGlyphs">Format</text>
<text x="345.11" y="54.00" font-size="15.99" fill="#1f1f1f" textLength="35.69" lengthAdjust="spacingAndGlyphs">Data</text>
<text x="399.64" y="54.00" font-size="15.99" fill="#1f1f1f" textLength="38.73" lengthAdjust="spacingAndGlyphs">Tools</text>
<text x="456.14" y="54.00" font-size="15.99" fill="#1f1f1f" textLength="81.26" lengthAdjust="spacingAndGlyphs">Extensions</text>
<text x="554.59" y="54.00" font-size="15.99" fill="#1f1f1f" textLength="35.33" lengthAdjust="spacingAndGlyphs">Help</text>
<path d="M1191.8 21.8 A10 10 0 1 1 1187.5 30.0" stroke="#3a3b3d" stroke-width="2" fill="none"/>
<path d="M1186.3 21.8 V28.1 H1192.6" stroke="#3a3b3d" stroke-width="2" fill="none"/>
<path d="M1197.3 24.6 V31.2 L1202.6 34.6" stroke="#3a3b3d" stroke-width="2" fill="none"/>
<path d="M1244 20.5 H1264.3 V41.6 L1261 37.5 H1244Z" stroke="#3a3b3d" stroke-width="1.9" fill="none" stroke-linejoin="round"/>
<path d="M1247.8 25.4 H1260.8 M1247.8 29.2 H1260.8 M1247.8 33 H1260.8" stroke="#3a3b3d" stroke-width="1.6" fill="none"/>
<path d="M1309.6 23 H1322 Q1323.5 23 1323.5 24.5 V38.5 Q1323.5 40 1322 40 H1306.5 Q1305 40 1305 38.5 V27.5Z" stroke="#3a3b3d" stroke-width="1.9" fill="none" stroke-linejoin="round"/>
<path d="M1323.5 29.5 L1328 25.7 V37.3 L1323.5 33.5Z" fill="#3a3b3d"/>
<path d="M1339.8 29 L1348 29 L1343.9 32.3Z" fill="#3a3b3d"/>
<rect x="1375" y="8.2" width="142.4" height="45" rx="22.5" fill="#c2e7ff"/>
<rect x="1478.70" y="8.20" width="1.20" height="45.00" fill="#f9fbfd" />
<rect x="1398" y="27.5" width="13" height="10.5" rx="1.2" stroke="#041e49" stroke-width="1.9" fill="none"/>
<path d="M1400.8 27.5 V24.5 A3.7 3.7 0 0 1 1408.2 24.5 V27.5" stroke="#041e49" stroke-width="1.9" fill="none"/>
<circle cx="1404.5" cy="32.8" r="1.4" fill="#041e49"/>
<text x="1423.93" y="36.20" font-size="16.57" stroke="#041e49" stroke-width="0.45" fill="#041e49" textLength="45.22" lengthAdjust="spacingAndGlyphs">Share</text>
<path d="M1493.5 29.5 L1502.5 29.5 L1498 33.5Z" fill="#041e49"/>
<circle cx="1558.90" cy="30.60" r="21.80" fill="none" stroke="#4285f4" stroke-width="2.2" stroke-dasharray="36.53 200" transform="rotate(-48 1558.90 30.60)"/>
<circle cx="1558.90" cy="30.60" r="21.80" fill="none" stroke="#34a853" stroke-width="2.2" stroke-dasharray="39.57 200" transform="rotate(48 1558.90 30.60)"/>
<circle cx="1558.90" cy="30.60" r="21.80" fill="none" stroke="#fbbc04" stroke-width="2.2" stroke-dasharray="20.93 200" transform="rotate(152 1558.90 30.60)"/>
<circle cx="1558.90" cy="30.60" r="21.80" fill="none" stroke="#ea4335" stroke-width="2.2" stroke-dasharray="39.95 200" transform="rotate(207 1558.90 30.60)"/>
<clipPath id="av"><circle cx="1558.90" cy="30.60" r="18.3"/></clipPath>
<g clip-path="url(#av)">
<rect x="1538.00" y="10.00" width="42.00" height="42.00" fill="#d6c3a9" />
<rect x="1566.00" y="10.00" width="14.00" height="30.00" fill="#c9bcae" />
<path d="M1549 52 Q1549.5 32 1551 24 Q1553 14.5 1559.5 14.5 Q1566 14.5 1568 24 Q1569.5 34 1572 52Z" fill="#7a5638"/>
<ellipse cx="1559.2" cy="29.5" rx="7.0" ry="8.6" fill="#d7a08c"/>
<path d="M1552.5 26.5 H1565.5" stroke="#8c6a5c" stroke-width="1" fill="none"/>
<path d="M1538 52 Q1541 41.5 1551 40.5 Q1559 43 1567 40.5 Q1577 41.5 1580 52Z" fill="#1c1c1c"/>
<path d="M1551 40 Q1549.5 46 1551.5 52 H1555 Q1553.5 45 1553.5 39Z M1567 40 Q1568.5 46 1566.5 52 H1563 Q1564.5 45 1564.5 39Z" fill="#7a5638"/>
<path d="M1551.8 24.5 Q1559.5 18 1567 24 Q1566 16.5 1559.5 16.3 Q1552.5 16.5 1551.8 24.5Z" fill="#7a5638"/>
</g>
<circle cx="44.3" cy="92" r="5.3" stroke-width="1.8" stroke="#3a3b3d" fill="none"/>
<path d="M48.2 96 L53.8 101.3" stroke-width="1.9" stroke="#3a3b3d" fill="none"/>
<path d="M81.1 100.7 H87.9 A3.65 3.65 0 0 0 87.9 93.4 H79.5" stroke-width="1.7" stroke="#3a3b3d" fill="none"/>
<path d="M82.8 90.1 L79.5 93.4 L82.8 96.8" stroke-width="1.7" stroke="#3a3b3d" fill="none"/>
<path d="M126.1 100.7 H119 A3.65 3.65 0 0 1 119 93.4 H127.8" stroke-width="1.7" stroke="#3a3b3d" fill="none"/>
<path d="M124.4 90.1 L127.8 93.4 L124.4 96.8" stroke-width="1.7" stroke="#3a3b3d" fill="none"/>
<path d="M154.1 92.4 V87.8 H163 V92.4" stroke-width="1.65" stroke="#3a3b3d" fill="none"/>
<path d="M153.6 98.2 H150.4 V94.2 Q150.4 92.6 152 92.6 H165.4 Q167 92.6 167 94.2 V98.2 H163.6" stroke-width="1.65" stroke="#3a3b3d" fill="none"/>
<rect x="154.1" y="97.0" width="8.9" height="4.8" stroke-width="1.65" stroke="#3a3b3d" fill="none"/>
<circle cx="164.2" cy="94.5" r="0.7" fill="#3a3b3d"/>
<rect x="190.8" y="86.8" width="10.2" height="3.3" rx="0.8" stroke-width="1.6" stroke="#3a3b3d" fill="none"/>
<path d="M190.8 88.45 H188.3 Q187.2 88.45 187.2 89.5 V92.8 Q187.2 93.9 188.3 93.9 H194.3 Q195.4 93.9 195.4 95 V99.5" stroke-width="1.6" stroke="#3a3b3d" fill="none"/>
<rect x="194" y="100" width="3" height="4.1" rx="0.5" stroke-width="1.6" stroke="#3a3b3d" fill="none"/>
<text x="222.92" y="100.80" font-size="16.72" fill="#444746" textLength="42.98" lengthAdjust="spacingAndGlyphs">100%</text>
<path d="M281.20 92.00 L290.00 92.00 L285.60 96.50Z" fill="#3a3b3d"/>
<rect x="305.00" y="82.40" width="1.00" height="22.60" fill="#c7c7c7" />
<text x="324.04" y="99.00" font-size="14.54" fill="#444746" textLength="8.20" lengthAdjust="spacingAndGlyphs">$</text>
<text x="358.18" y="99.50" font-size="15.26" fill="#444746" textLength="12.94" lengthAdjust="spacingAndGlyphs">%</text>
<text x="390.70" y="95.80" font-size="13.95" fill="#444746" textLength="11.85" lengthAdjust="spacingAndGlyphs">.0</text>
<path d="M410.4 100.5 H402.5 M405.3 97.8 L402.4 100.5 L405.3 103.2" stroke-width="1.4" stroke="#3a3b3d" fill="none"/>
<text x="427.47" y="95.80" font-size="13.95" fill="#444746" textLength="20.30" lengthAdjust="spacingAndGlyphs">.00</text>
<path d="M437.7 100.5 H445.8 M443 97.8 L445.9 100.5 L443 103.2" stroke-width="1.4" stroke="#3a3b3d" fill="none"/>
<text x="464.62" y="97.60" font-size="12.94" fill="#444746" textLength="21.44" lengthAdjust="spacingAndGlyphs">123</text>
<rect x="498.30" y="82.40" width="1.00" height="22.60" fill="#c7c7c7" />
<text x="516.33" y="99.20" font-size="16.28" fill="#444746" textLength="62.40" lengthAdjust="spacingAndGlyphs">Defaul...</text>
<path d="M594.00 91.00 L602.80 91.00 L598.40 95.50Z" fill="#3a3b3d"/>
<rect x="619.90" y="82.40" width="1.00" height="22.60" fill="#c7c7c7" />
<rect x="632.70" y="92.90" width="12.00" height="1.60" fill="#3a3b3d" />
<rect x="657.2" y="80.7" width="37.5" height="26" rx="4.5" fill="none" stroke="#747775" stroke-width="1.1"/>
<text x="665.94" y="99.20" font-size="15.41" fill="#1f1f1f" textLength="18.41" lengthAdjust="spacingAndGlyphs">10</text>
<path d="M706 94 H718 M712 88 V100" stroke-width="1.6" stroke="#3a3b3d" fill="none"/>
<rect x="731.10" y="82.40" width="1.00" height="22.60" fill="#c7c7c7" />
<text x="747.76" y="100.40" font-size="16.57" font-weight="bold" fill="#444746" textLength="11.25" lengthAdjust="spacingAndGlyphs">B</text>
<path d="M787.5 89.6 H796 M784.8 100 H793.2 M791.8 89.6 L789 100" stroke-width="1.9" stroke="#3a3b3d" fill="none"/>
<path d="M818.5 93.8 H836.3" stroke-width="1.6" stroke="#3a3b3d" fill="none"/>
<path d="M823.9 90.8 Q824.2 88.3 827.6 88.3 Q830.4 88.3 830.9 90.4 M823.3 97.4 Q823.6 100.8 827.5 100.8 Q831.5 100.8 831.5 97.4" stroke-width="1.7" stroke="#3a3b3d" fill="none"/>
<path d="M860.3 97.4 L864.9 87.0 L869.5 97.4 M862.2 93.8 H867.6" stroke-width="1.6" stroke="#3a3b3d" fill="none"/>
<rect x="851.70" y="101.00" width="26.30" height="4.10" fill="#000000" />
<rect x="888.00" y="82.40" width="1.00" height="22.60" fill="#c7c7c7" />
<path d="M907 83 L910.3 86.4" stroke-width="1.6" stroke="#3a3b3d" fill="none"/>
<path d="M909.5 85.6 L903.8 91.3 L909.3 96.8 L915 91.1Z" stroke-width="1.7" stroke="#3a3b3d" fill="none" stroke-linejoin="round"/>
<path d="M905 91.3 H914 L909.3 96 Z" fill="#3a3b3d"/>
<path d="M917.5 92 Q919.8 94.8 919.8 96 A2.3 2.3 0 0 1 915.2 96 Q915.2 94.8 917.5 92Z" fill="#3a3b3d"/>
<rect x="898.60" y="101.00" width="26.30" height="4.10" fill="#ffffff" />
<rect x="943" y="87.6" width="14.6" height="14.6" stroke-width="1.8" stroke="#3a3b3d" fill="none"/>
<path d="M950.3 87.6 V102.2 M943 94.9 H957.6" stroke-width="1.6" stroke="#3a3b3d" fill="none"/>
<path d="M985.6 88.5 H981.2 V91.8 M981.2 98.2 V101.6 H985.6 M991 88.5 H995.8 V91.8 M995.8 98.2 V101.6 H991" stroke-width="1.6" stroke="#b6b9bb" fill="none"/>
<path d="M980.4 94.8 H986.6 M984.3 92.4 L986.7 94.8 L984.3 97.2 M996.6 94.8 H990.3 M992.6 92.4 L990.2 94.8 L992.6 97.2" stroke-width="1.6" stroke="#b6b9bb" fill="none"/>
<path d="M1008.10 92.60 L1016.90 92.60 L1012.50 97.10Z" fill="#b6b9bb"/>
<rect x="1024.40" y="82.40" width="1.00" height="22.60" fill="#c7c7c7" />
<rect x="1037.00" y="86.85" width="15.80" height="1.50" fill="#3a3b3d" />
<rect x="1037.00" y="90.55" width="11.30" height="1.50" fill="#3a3b3d" />
<rect x="1037.00" y="94.25" width="15.80" height="1.50" fill="#3a3b3d" />
<rect x="1037.00" y="97.95" width="11.30" height="1.50" fill="#3a3b3d" />
<rect x="1037.00" y="101.55" width="15.80" height="1.50" fill="#3a3b3d" />
<path d="M1060.80 92.50 L1069.60 92.50 L1065.20 97.00Z" fill="#3a3b3d"/>
<path d="M1091.4 87 V99 M1086.8 94.5 L1091.4 99.2 L1096 94.5" stroke-width="1.7" stroke="#3a3b3d" fill="none"/>
<rect x="1084.80" y="101.40" width="13.20" height="1.60" fill="#3a3b3d" />
<path d="M1107.60 92.50 L1116.40 92.50 L1112.00 97.00Z" fill="#3a3b3d"/>
<rect x="1131.45" y="87.90" width="1.70" height="13.80" fill="#3a3b3d" />
<path d="M1138.3 88 V91.5 M1138.3 98.5 V102 M1135.5 95 H1144.6 M1141.3 91.7 L1144.8 95 L1141.3 98.3" stroke-width="1.6" stroke="#3a3b3d" fill="none"/>
<path d="M1154.60 92.50 L1163.40 92.50 L1159.00 97.00Z" fill="#3a3b3d"/>
<path d="M1180.5 97 L1185 87.3 L1189.5 97 M1182.2 93.2 H1187.8" stroke-width="1.6" stroke="#3a3b3d" fill="none"/>
<path d="M1178.8 100 H1192.3 M1189.3 97.2 L1192.5 100 L1189.3 102.8" stroke-width="1.6" stroke="#3a3b3d" fill="none"/>
<path d="M1201.60 92.50 L1210.40 92.50 L1206.00 97.00Z" fill="#3a3b3d"/>
<rect x="1219.90" y="82.40" width="1.00" height="22.60" fill="#c7c7c7" />
<path d="M1239.3 90.8 H1237.8 A4.4 4.4 0 0 0 1237.8 99.5 H1239.5 M1246 90.8 H1247.5 A4.4 4.4 0 0 1 1247.5 99.5 H1245.8 M1238.5 95.15 H1246.8" stroke-width="1.8" stroke="#3a3b3d" fill="none"/>
<path d="M1271.2 87.2 H1287.2 V100.2 H1274.3 L1271.2 103.3Z" stroke-width="1.8" stroke="#3a3b3d" fill="none" stroke-linejoin="round"/>
<path d="M1275.2 93.7 H1283.2 M1279.2 89.7 V97.7" stroke-width="1.6" stroke="#3a3b3d" fill="none"/>
<rect x="1308.6" y="87.9" width="14.2" height="14" rx="1" stroke-width="1.8" stroke="#3a3b3d" fill="none"/>
<path d="M1312.5 93.5 V99 M1315.7 91 V99 M1318.9 96 V99" stroke-width="1.6" stroke="#3a3b3d" fill="none"/>
<path d="M1346.6 89.2 H1358.6 L1352.6 95.6 Z M1352.6 95.2 V101.6" stroke-width="1.8" stroke="#3a3b3d" fill="none" stroke-linejoin="miter"/>
<path d="M1378 101.5 V87 H1391.5" stroke-width="1.5" stroke="#3a3b3d" fill="none"/>
<rect x="1380.5" y="89.8" width="14" height="13.2" rx="1" stroke-width="1.8" stroke="#3a3b3d" fill="none"/>
<path d="M1380.5 93.8 H1394.5 M1380.5 98.2 H1394.5 M1385.2 93.8 V103 M1389.8 93.8 V103" stroke-width="1.3" stroke="#3a3b3d" fill="none"/>
<path d="M1403.20 92.40 L1412.00 92.40 L1407.60 96.90Z" fill="#3a3b3d"/>
<path d="M1441 88.8 H1432.3 L1437 94.8 L1432.3 100.7 H1441" stroke-width="1.8" stroke="#3a3b3d" fill="none" stroke-linejoin="miter"/>
<path d="M1544.3 97.6 L1549.6 92.3 L1554.9 97.6" stroke-width="1.65" stroke="#3a3b3d" fill="none"/>
</svg>
</div>
</body></html>
